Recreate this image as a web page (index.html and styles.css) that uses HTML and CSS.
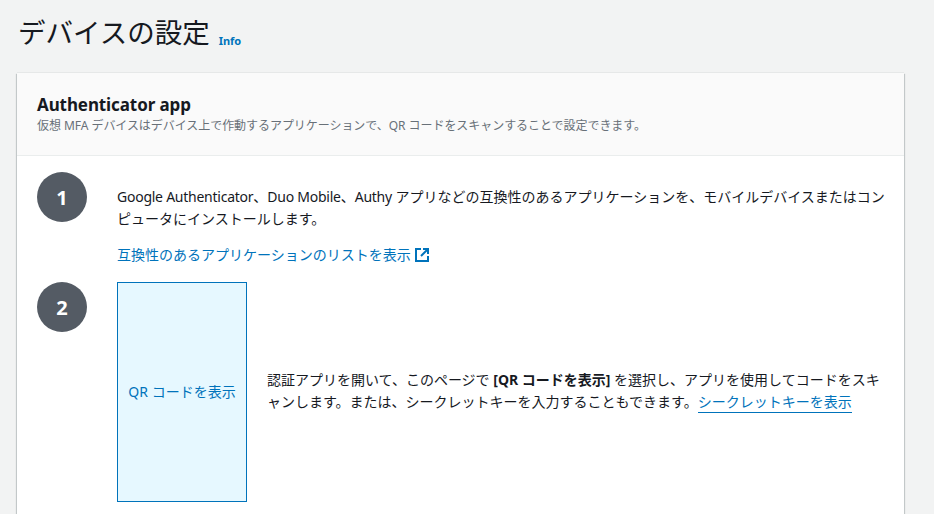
FILE: index.html
```html
<!DOCTYPE html>
<html lang="ja">
<head>
<meta charset="utf-8">
<title>デバイスの設定</title>
<link rel="stylesheet" href="styles.css">
</head>
<body>
<main class="page">
  <div class="title-row">
    <h1 class="title">デバイスの設定</h1>
    <a class="info">Info</a>
  </div>
  <section class="card">
    <header class="card-head">
      <h2 class="card-title">Authenticator app</h2>
      <p class="card-desc">仮想 MFA デバイスはデバイス上で作動するアプリケーションで、QR コードをスキャンすることで設定できます。</p>
    </header>
    <div class="card-body">
      <div class="step step-one">
        <div class="num">1</div>
        <div class="step-main">
          <p class="lead"><span class="latin">Google Authenticator</span>、<span class="latin">Duo Mobile</span>、<span class="latin">Authy</span> アプリなどの互換性のあるアプリケーションを、モバイルデバイスまたはコンピュータにインストールします。</p>
          <a class="ext-link">互換性のあるアプリケーションのリストを表示<svg class="ext-icon" viewBox="0 0 14 14" width="14" height="14" fill="none" stroke="currentColor" stroke-width="2"><path d="M6 1H1v12h12V8"/><path d="M8 1h5v5"/><path d="M13 1L6 8"/></svg></a>
        </div>
      </div>
      <div class="step">
        <div class="num">2</div>
        <div class="qr-row">
          <div class="qr-box">QR コードを表示</div>
          <p class="qr-text">認証アプリを開いて、このページで <b>[QR コードを表示]</b> を選択し、アプリを使用してコードをスキャンします。または、シークレットキーを入力することもできます。<a class="secret">シークレットキーを表示</a></p>
        </div>
      </div>
    </div>
  </section>
</main>
</body>
</html>
```

FILE: styles.css
```css
* { box-sizing: border-box; }
html, body { margin: 0; height: 514px; overflow: hidden; }
body {
  background: #f2f3f3;
  color: #16191f;
  font-family: "Noto Sans", "Noto Sans CJK JP", sans-serif;
}
.page { padding: 12px 30px 0 17px; }
.title-row { display: flex; align-items: flex-start; gap: 9px; height: 61px; padding-left: 1px; }
.title { margin: 0; font-size: 27.5px; line-height: 42px; font-weight: 400; }
.info { font-size: 11px; font-weight: 700; color: #0073bb; line-height: 14px; margin-top: 22px; }
.card {
  background: #fff;
  height: 460px;
  box-shadow: 0 -1px 0 0 #e6e8e8, 0 1px 1px 0 rgba(0,28,36,.3), 1px 1px 1px 0 rgba(0,28,36,.15), -1px 1px 1px 0 rgba(0,28,36,.15);
}
.card-head {
  background: #fafafa;
  border-bottom: 1px solid #eaeded;
  height: 83px;
  padding: 21px 20px 0;
}
.card-title { margin: 0; font-size: 17px; line-height: 22px; font-weight: 700; letter-spacing: -.1px; }
.card-desc { margin: 1px 0 0; font-size: 12px; line-height: 17px; color: #687078; letter-spacing: -.05px; }
.card-body { padding: 16px 16px 0 20px; }
.step { display: flex; gap: 30px; }
.step-one { margin-bottom: 16px; }
.num {
  flex: none;
  width: 50px;
  height: 50px;
  border-radius: 50%;
  background: #545b64;
  color: #fff;
  font-size: 20px;
  font-weight: 700;
  display: flex;
  align-items: center;
  justify-content: center;
}
.step-main { flex: 1; padding-top: 14px; }
.lead { margin: 0 0 14px; font-size: 14px; line-height: 22px; }
.latin { letter-spacing: -.25px; }
.ext-link { display: flex; align-items: center; gap: 4px; font-size: 14px; line-height: 22px; color: #0073bb; }
.ext-icon { width: 14px; height: 14px; }
.qr-row { flex: 1; display: flex; align-items: center; gap: 20px; }
.qr-box {
  flex: none;
  width: 130px;
  height: 220px;
  padding-bottom: 2px;
  background: #e6f8ff;
  border: 1px solid #0073bb;
  color: #0073bb;
  font-size: 14px;
  display: flex;
  align-items: center;
  justify-content: center;
}
.qr-text { margin: 0; padding-bottom: 2px; font-size: 14px; line-height: 22px; }
.secret { color: #0073bb; border-bottom: 1px solid #0073bb; padding-bottom: 1px; }
```
